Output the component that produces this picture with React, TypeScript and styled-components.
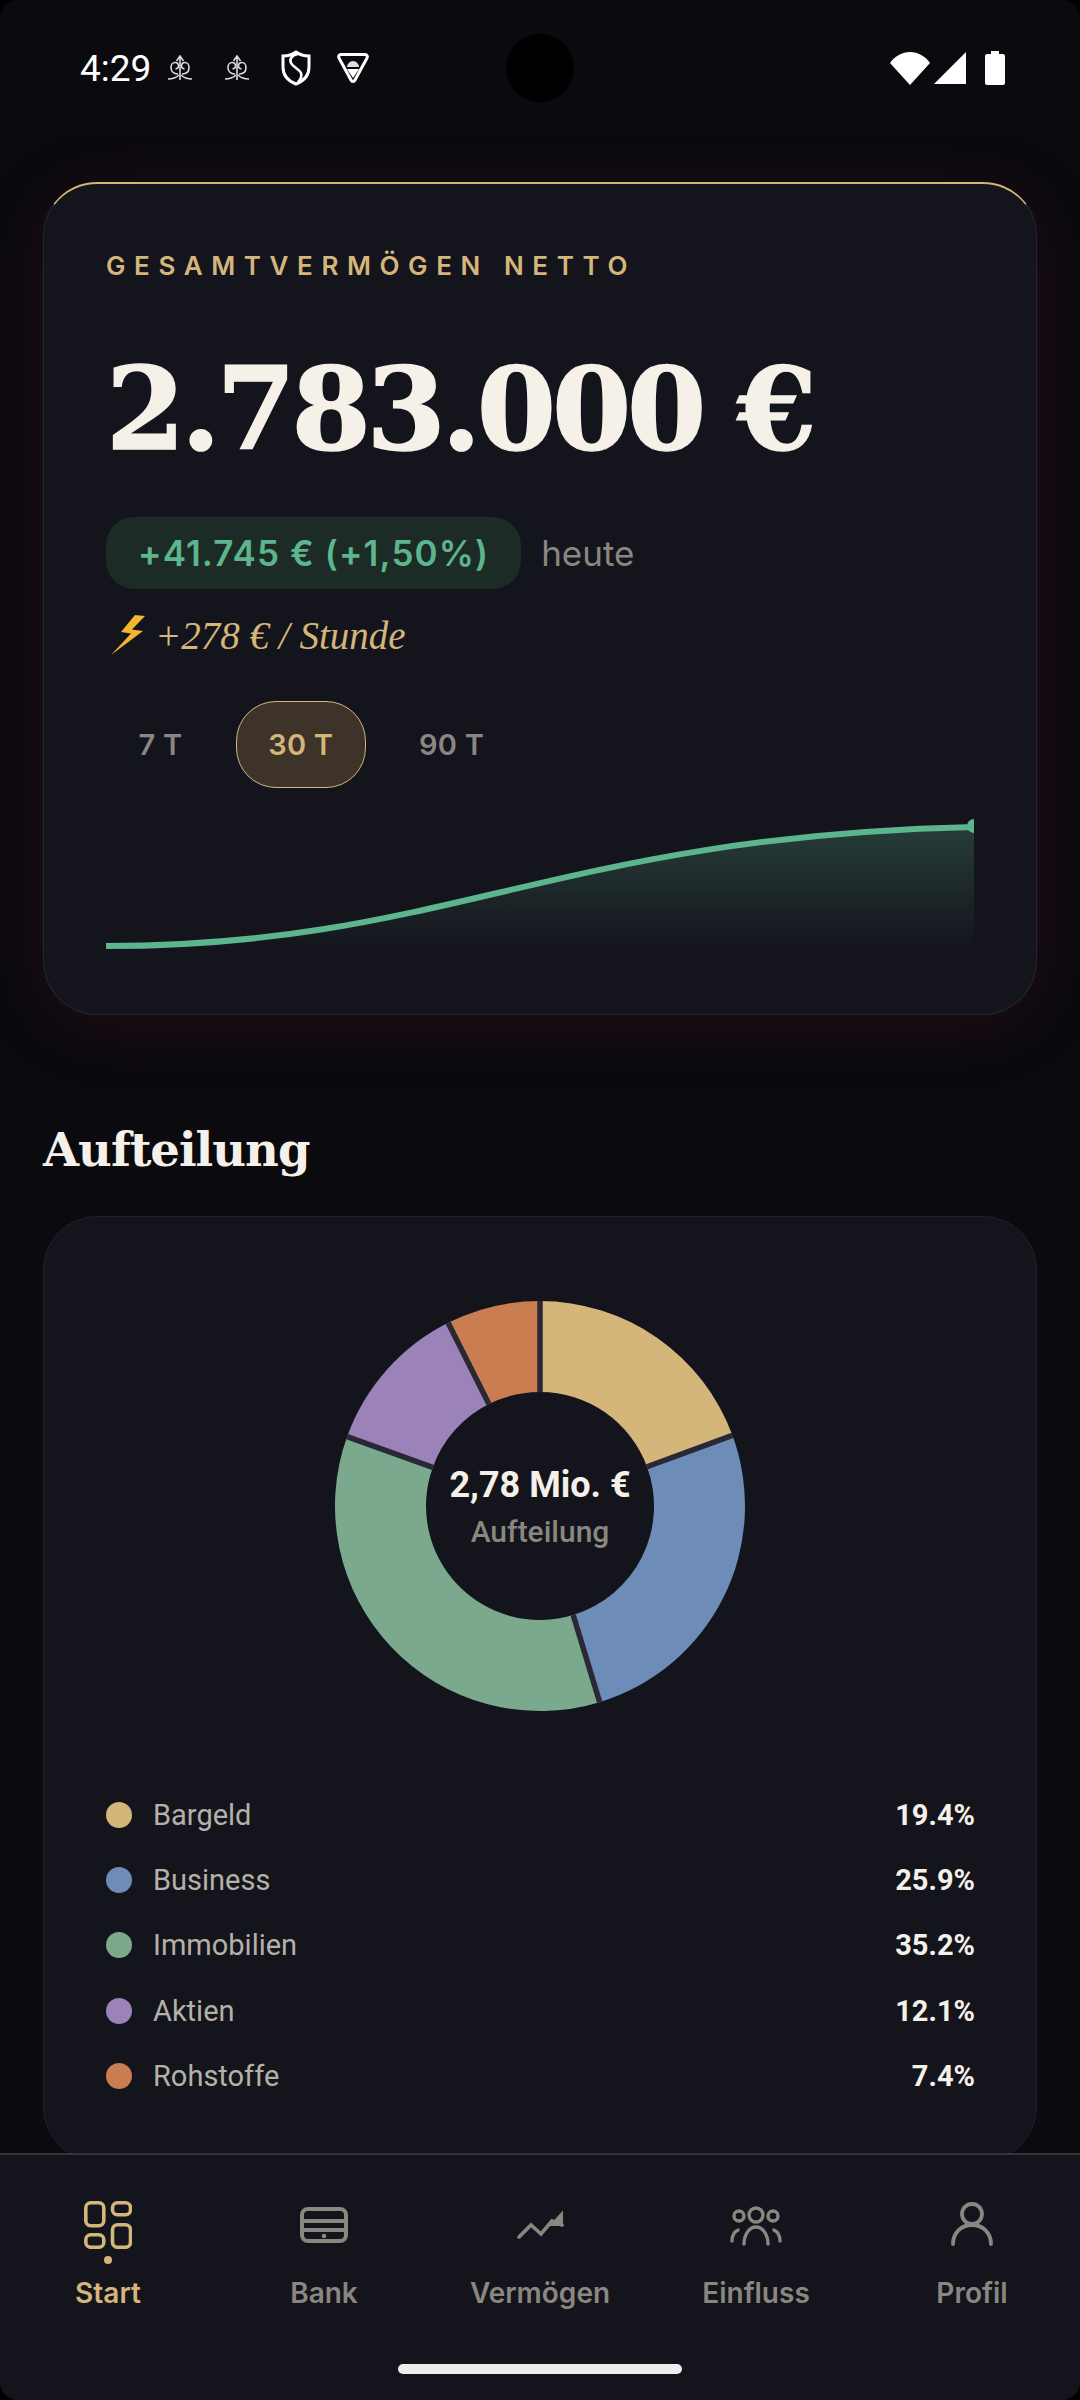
import styled, { createGlobalStyle } from "styled-components";

const gold = "#d4b57a";
const muted = "#8a8680";
const cream = "#f5f0e8";

const GlobalStyle = createGlobalStyle`
  html, body {
    margin: 0;
    padding: 0;
    background: #000;
  }
`;

const slices = [
  { name: "Bargeld", value: 19.4, color: gold },
  { name: "Business", value: 25.9, color: "#6d8db8" },
  { name: "Immobilien", value: 35.2, color: "#7aa98e" },
  { name: "Aktien", value: 12.1, color: "#9b82b8" },
  { name: "Rohstoffe", value: 7.4, color: "#c97d50" },
];

const polar = (r: number, pct: number) => {
  const a = (pct / 100) * 2 * Math.PI;
  return [205 + r * Math.sin(a), 205 - r * Math.cos(a)];
};

function Donut() {
  const total = slices.reduce((s, x) => s + x.value, 0);
  let acc = 0;
  const arcs = slices.map((s) => {
    const from = (acc / total) * 100;
    acc += s.value;
    const to = (acc / total) * 100;
    const [ax, ay] = polar(205, from);
    const [bx, by] = polar(205, to);
    const [cx, cy] = polar(114, to);
    const [dx, dy] = polar(114, from);
    const large = to - from > 50 ? 1 : 0;
    return {
      color: s.color,
      d: `M${ax} ${ay}A205 205 0 ${large} 1 ${bx} ${by}L${cx} ${cy}A114 114 0 ${large} 0 ${dx} ${dy}Z`,
      gap: `M${dx} ${dy}L${ax} ${ay}`,
    };
  });
  return (
    <svg width="410" height="410" viewBox="0 0 410 410">
      {arcs.map((a) => (
        <path key={a.color} d={a.d} fill={a.color} />
      ))}
      {arcs.map((a) => (
        <path key={a.gap} d={a.gap} stroke="#2a2835" strokeWidth="5.5" />
      ))}
    </svg>
  );
}

function SparkChart() {
  const line = "M0 146C340 146 450 36 868 27";
  return (
    <svg width="868" height="150" viewBox="0 0 868 150">
      <defs>
        <linearGradient id="fillGreen" x1="0" y1="0" x2="0" y2="1">
          <stop offset="0" stopColor="#5cb58c" stopOpacity="0.25" />
          <stop offset="1" stopColor="#5cb58c" stopOpacity="0" />
        </linearGradient>
      </defs>
      <path d={`${line}L868 150L0 150Z`} fill="url(#fillGreen)" />
      <path d={line} fill="none" stroke="#5cb58c" strokeWidth="6" />
      <circle cx="868" cy="26" r="7" fill="#5cb58c" />
    </svg>
  );
}

function TreeGlyph() {
  return (
    <svg width="26" height="26" viewBox="0 0 26 26" fill="none" stroke="#ddd" strokeWidth="1.6">
      <path d="M13 1v24M9.5 6L13 1l3.5 5" />
      <path d="M11 19c-5 0-7-3-7-6.500 0-3 2-5 4-5s3.500 1.500 3.500 3.500-1.500 3-3 2.500" />
      <path d="M15 19c5 0 7-3 7-6.500 0-3-2-5-4-5s-3.500 1.500-3.500 3.500 1.500 3 3 2.500" />
      <path d="M1 24c4 0 8-1 11-4M25 24c-4 0-8-1-11-4" />
    </svg>
  );
}

function ShieldGlyph() {
  return (
    <svg width="30" height="36" viewBox="0 0 30 36" fill="none" stroke="#fff" strokeWidth="3">
      <path d="M15 2c4 3 8 4 13 4v11c0 8-5 14-13 17C7 31 2 25 2 17V6c5 0 9-1 13-4z" />
      <path d="M17 4c-6 1-9 5-7 9 2 4 8 6 10 10 1 3 0 6-3 9" strokeWidth="2.6" />
    </svg>
  );
}

function VpnGlyph() {
  return (
    <svg width="34" height="32" viewBox="0 0 34 32" fill="none">
      <path d="M5 2.500h24c2 0 3 2 2 3.500L19 28c-1 2-3 2-4 0L3 6C2 4.500 3 2.500 5 2.500z" stroke="#fff" strokeWidth="3" />
      <path d="M11 15c0-3 3-6 6-6s6 3 6 6z" fill="#ddd" />
      <path d="M11 17h12l-6 9z" fill="#fff" />
    </svg>
  );
}

function SystemIcons() {
  return (
    <SystemTray>
      <svg width="40" height="33" viewBox="0 0 40 33">
        <path d="M0 11C5 4 12 0 20 0s15 4 20 11L20 33z" fill="#fff" />
      </svg>
      <svg width="32" height="32" viewBox="0 0 32 32">
        <path d="M32 0v32H0z" fill="#fff" />
      </svg>
      <BatteryGap />
      <svg width="20" height="34" viewBox="0 0 20 34">
        <path d="M6 0h8v3h4c1 0 2 1 2 2v27c0 1-1 2-2 2H2c-1 0-2-1-2-2V5c0-1 1-2 2-2h4z" fill="#fff" />
      </svg>
    </SystemTray>
  );
}

function BoltGlyph() {
  return (
    <svg width="38" height="40" viewBox="0 0 36 40">
      <path d="M25 0L11 17l10 1.500L1 40l32-24-11-1.500L35 1z" fill="#f2b630" />
    </svg>
  );
}

function StartIcon() {
  return (
    <svg width="48" height="48" viewBox="0 0 48 48" fill="none" stroke="currentColor" strokeWidth="3.6">
      <rect x="1.800" y="1.800" width="18" height="23" rx="5" />
      <rect x="28.500" y="1.800" width="18" height="12" rx="5" />
      <rect x="28.500" y="23.800" width="18" height="22.500" rx="5" />
      <rect x="1.800" y="33.800" width="18" height="12.500" rx="5" />
    </svg>
  );
}

function BankIcon() {
  return (
    <svg width="48" height="48" viewBox="0 0 48 48" fill="none" stroke="currentColor" strokeWidth="4">
      <rect x="2" y="8" width="44" height="32" rx="6" />
      <path d="M2 20h44M2 29h44" />
      <circle cx="24" cy="35" r="2.300" fill="currentColor" stroke="none" />
    </svg>
  );
}

function AssetsIcon() {
  return (
    <svg width="48" height="48" viewBox="0 0 48 48" fill="none" stroke="currentColor" strokeWidth="3.600" strokeLinecap="round">
      <path d="M3 36l12-12 10 9 11-13 10 4" />
      <path d="M46 12v12H35z" fill="currentColor" strokeWidth="2" strokeLinejoin="miter" />
    </svg>
  );
}

function PeopleIcon() {
  return (
    <svg width="52" height="48" viewBox="0 0 52 48" fill="none" stroke="currentColor" strokeWidth="3.400" strokeLinecap="round">
      <circle cx="26" cy="14" r="7" />
      <circle cx="9" cy="15" r="5" />
      <circle cx="43" cy="15" r="5" />
      <path d="M14 43c0-9 5-17 12-17s12 8 12 17" />
      <path d="M2 40c0-5 2-9 6-11M50 40c0-5-2-9-6-11" />
    </svg>
  );
}

function ProfileIcon() {
  return (
    <svg width="48" height="48" viewBox="0 0 48 48" fill="none" stroke="currentColor" strokeWidth="3.800" strokeLinecap="round">
      <circle cx="24" cy="13" r="10" />
      <path d="M5 43c0-11 8-19 19-19s19 8 19 19" />
    </svg>
  );
}

const navItems = [
  { label: "Start", icon: <StartIcon />, active: true },
  { label: "Bank", icon: <BankIcon />, active: false },
  { label: "Vermögen", icon: <AssetsIcon />, active: false },
  { label: "Einfluss", icon: <PeopleIcon />, active: false },
  { label: "Profil", icon: <ProfileIcon />, active: false },
];

export default function App() {
  return (
    <>
      <GlobalStyle />
      <Frame>
        <StatusBar>
          <StatusLeft>
            <Clock>4:29</Clock>
            <NotificationIcons>
              <TreeGlyph />
              <TreeGlyph />
              <ShieldGlyph />
              <VpnSlot>
                <VpnGlyph />
              </VpnSlot>
            </NotificationIcons>
          </StatusLeft>
          <Camera />
          <SystemIcons />
        </StatusBar>

        <Content>
          <HeroCard>
            <Eyebrow>GESAMTVERMÖGEN NETTO</Eyebrow>
            <Total>2.783.000 €</Total>
            <ChangeRow>
              <ChangeBadge>+41.745 € (+1,50%)</ChangeBadge>
              <ChangeHint>heute</ChangeHint>
            </ChangeRow>
            <RateLine>
              <BoltGlyph />
              +278 € / Stunde
            </RateLine>
            <RangeTabs>
              <RangeTab>7 T</RangeTab>
              <RangeTab $active>30 T</RangeTab>
              <RangeTab>90 T</RangeTab>
            </RangeTabs>
            <ChartBox>
              <SparkChart />
            </ChartBox>
          </HeroCard>

          <SectionTitle>Aufteilung</SectionTitle>

          <SplitCard>
            <DonutBox>
              <Donut />
              <DonutCenter>
                <DonutValue>2,78 Mio. €</DonutValue>
                <DonutCaption>Aufteilung</DonutCaption>
              </DonutCenter>
            </DonutBox>
            <Legend>
              {slices.map((s) => (
                <LegendRow key={s.name}>
                  <LegendDot $color={s.color} />
                  <LegendName>{s.name}</LegendName>
                  <LegendValue>{s.value.toFixed(1)}%</LegendValue>
                </LegendRow>
              ))}
            </Legend>
          </SplitCard>
        </Content>

        <BottomNav>
          <NavItems>
            {navItems.map((item) => (
              <NavItem key={item.label} $active={item.active}>
                <NavIcon>
                  {item.icon}
                  {item.active && <ActiveDot />}
                </NavIcon>
                <NavLabel>{item.label}</NavLabel>
              </NavItem>
            ))}
          </NavItems>
          <HomeBar />
        </BottomNav>
      </Frame>
    </>
  );
}

const Frame = styled.div`
  position: relative;
  width: 1080px;
  height: 2400px;
  display: flex;
  flex-direction: column;
  overflow: hidden;
  border-radius: 18px;
  background: #0a0a0f;
  font-family: Inter, "Liberation Sans", sans-serif;
`;

const StatusBar = styled.div`
  position: relative;
  flex: none;
  height: 136px;
  box-sizing: border-box;
  padding: 0 75px 0 80px;
  display: flex;
  align-items: center;
  justify-content: space-between;
`;

const StatusLeft = styled.div`
  display: flex;
  align-items: center;
  gap: 16px;
`;

const Clock = styled.span`
  font-family: Roboto, sans-serif;
  font-size: 37px;
  color: #fff;
`;

const NotificationIcons = styled.div`
  display: flex;
  align-items: center;
  gap: 31px;
`;

const VpnSlot = styled.span`
  display: flex;
  margin-left: -6px;
`;

const Camera = styled.div`
  position: absolute;
  left: 506px;
  top: 34px;
  width: 68px;
  height: 68px;
  border-radius: 50%;
  background: #000;
`;

const SystemTray = styled.div`
  display: flex;
  align-items: center;
  gap: 4px;
`;

const BatteryGap = styled.span`
  width: 11px;
`;

const Content = styled.div`
  flex: 1;
  min-height: 0;
  overflow: hidden;
  padding: 46px 43px 0;
`;

const HeroCard = styled.section`
  box-sizing: border-box;
  padding: 66px 62px 64px;
  border: 1.5px solid #26252e;
  border-top: 2.5px solid ${gold};
  border-radius: 54px;
  background: #14141c;
  box-shadow: 0 10px 70px rgba(130, 30, 45, 0.2);
`;

const Eyebrow = styled.div`
  font-size: 26px;
  line-height: 32px;
  font-weight: 600;
  letter-spacing: 8.6px;
  color: ${gold};
`;

const Total = styled.div`
  margin-top: 57px;
  font-family: "DejaVu Serif", serif;
  font-size: 114px;
  line-height: 140px;
  font-weight: 700;
  letter-spacing: -4.3px;
  white-space: nowrap;
  color: ${cream};
  -webkit-text-stroke: 1.5px ${cream};
`;

const ChangeRow = styled.div`
  margin-top: 38px;
  display: flex;
  align-items: center;
  gap: 20px;
`;

const ChangeBadge = styled.span`
  height: 72px;
  box-sizing: border-box;
  padding: 0 32px;
  display: flex;
  align-items: center;
  border-radius: 28px;
  background: #1c2b26;
  font-size: 35px;
  font-weight: 600;
  letter-spacing: 1.1px;
  color: #5cb58c;
`;

const ChangeHint = styled.span`
  font-size: 35px;
  color: ${muted};
`;

const RateLine = styled.div`
  margin-top: 24px;
  display: flex;
  align-items: center;
  gap: 8px;
  height: 44px;
  padding-left: 3px;
  font-family: "Liberation Serif", serif;
  font-style: italic;
  font-size: 39px;
  color: ${gold};
`;

const RangeTabs = styled.div`
  margin-top: 44px;
  display: flex;
  gap: 21px;
`;

const RangeTab = styled.div<{ $active?: boolean }>`
  height: 87px;
  box-sizing: border-box;
  padding: 0 31.5px;
  display: flex;
  align-items: center;
  border-radius: 40px;
  border: 1.5px solid ${(p) => (p.$active ? gold : "transparent")};
  background: ${(p) => (p.$active ? "#3d3329" : "transparent")};
  font-size: 29px;
  font-weight: 600;
  letter-spacing: 0.2px;
  color: ${(p) => (p.$active ? gold : muted)};
`;

const ChartBox = styled.div`
  margin-top: 12px;
  height: 150px;
  overflow: hidden;
`;

const SectionTitle = styled.h2`
  margin: 105px 0 36px;
  font-family: "DejaVu Serif", serif;
  font-size: 46.5px;
  line-height: 60px;
  font-weight: 700;
  letter-spacing: -1px;
  color: ${cream};
`;

const SplitCard = styled.section`
  box-sizing: border-box;
  height: 945px;
  padding: 84px 61px 0;
  border: 1.5px solid #23222b;
  border-radius: 54px;
  background: #14141c;
`;

const DonutBox = styled.div`
  position: relative;
  width: 410px;
  height: 410px;
  margin: 0 auto;
`;

const DonutCenter = styled.div`
  position: absolute;
  inset: 0;
  padding-top: 3px;
  display: flex;
  flex-direction: column;
  align-items: center;
  justify-content: center;
  font-family: Roboto, sans-serif;
`;

const DonutValue = styled.div`
  font-size: 36px;
  line-height: 44px;
  font-weight: 700;
  color: ${cream};
`;

const DonutCaption = styled.div`
  margin-top: 5px;
  font-size: 30px;
  line-height: 40px;
  font-weight: 500;
  color: ${muted};
`;

const Legend = styled.div`
  margin-top: 85.5px;
  padding-left: 1px;
  display: flex;
  flex-direction: column;
  gap: 29.4px;
`;

const LegendRow = styled.div`
  height: 36px;
  display: flex;
  align-items: center;
`;

const LegendDot = styled.span<{ $color: string }>`
  width: 26px;
  height: 26px;
  margin-right: 21px;
  border-radius: 50%;
  background: ${(p) => p.$color};
`;

const LegendName = styled.span`
  flex: 1;
  font-family: Roboto, sans-serif;
  font-size: 29px;
  color: #b5b0a8;
`;

const LegendValue = styled.span`
  font-family: Roboto, sans-serif;
  font-size: 29px;
  font-weight: 700;
  color: ${cream};
`;

const BottomNav = styled.nav`
  position: relative;
  flex: none;
  height: 247px;
  box-sizing: border-box;
  padding-top: 46px;
  border-top: 2px solid #35343a;
  background: #14141c;
`;

const NavItems = styled.div`
  display: grid;
  grid-template-columns: repeat(5, 1fr);
`;

const NavItem = styled.div<{ $active: boolean }>`
  display: flex;
  flex-direction: column;
  align-items: center;
  color: ${(p) => (p.$active ? gold : muted)};
`;

const NavIcon = styled.div`
  position: relative;
  height: 48px;
  display: flex;
  justify-content: center;
`;

const ActiveDot = styled.span`
  position: absolute;
  left: 50%;
  bottom: -15px;
  width: 8px;
  height: 8px;
  margin-left: -4px;
  border-radius: 50%;
  background: ${gold};
`;

const NavLabel = styled.div`
  margin-top: 26px;
  font-size: 28px;
  line-height: 36px;
  font-weight: 600;
`;

const HomeBar = styled.div`
  width: 284px;
  height: 10px;
  margin: 53px auto 0;
  border-radius: 5px;
  background: #eee;
`;
